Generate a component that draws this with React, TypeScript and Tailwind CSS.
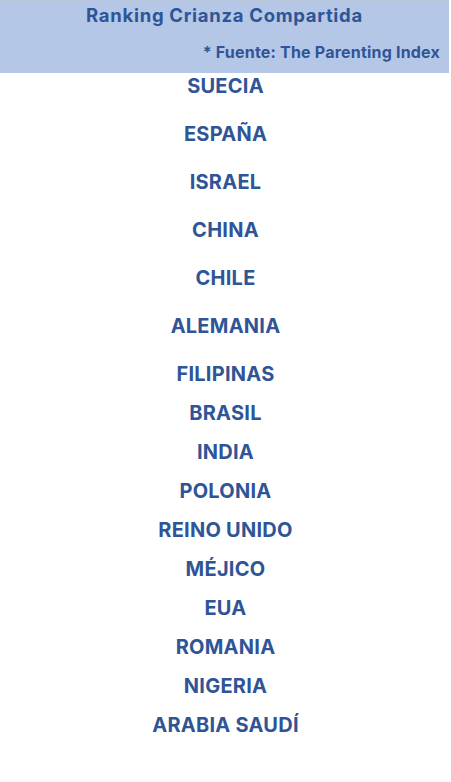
import React from "react";

const groupA = ["SUECIA", "ESPAÑA", "ISRAEL", "CHINA", "CHILE", "ALEMANIA", "FILIPINAS"];
const groupB = [
  "BRASIL",
  "INDIA",
  "POLONIA",
  "REINO UNIDO",
  "MÉJICO",
  "EUA",
  "ROMANIA",
  "NIGERIA",
  "ARABIA SAUDÍ",
];

export default function App() {
  return (
    <div
      className="w-[451px] h-[782px] bg-white text-[#2f5597] font-bold"
      style={{ fontFamily: "Inter, 'Open Sans', sans-serif" }}
    >
      <div className="w-[449px] h-[73px] bg-[#b4c7e7] border-t-2 border-[#bac7dd] flex flex-col">
        <div className="h-[27px] flex items-center justify-center text-[18.5px] tracking-[0.7px]">
          Ranking Crianza Compartida
        </div>
        <div className="mt-[8px] h-[30px] flex items-center justify-end pr-[9px] text-[16px] tracking-[0.2px]">
          * Fuente: The Parenting Index
        </div>
      </div>
      <div className="pt-[1px] flex flex-col items-center text-[20px] tracking-[0.25px]">
        <div className="flex flex-col items-center gap-[24px]">
          {groupA.map((c) => (
            <div key={c} className="h-[24px] flex items-center">
              {c}
            </div>
          ))}
        </div>
        <div className="mt-[15px] flex flex-col items-center gap-[15px]">
          {groupB.map((c) => (
            <div key={c} className="h-[24px] flex items-center">
              {c}
            </div>
          ))}
        </div>
      </div>
    </div>
  );
}
